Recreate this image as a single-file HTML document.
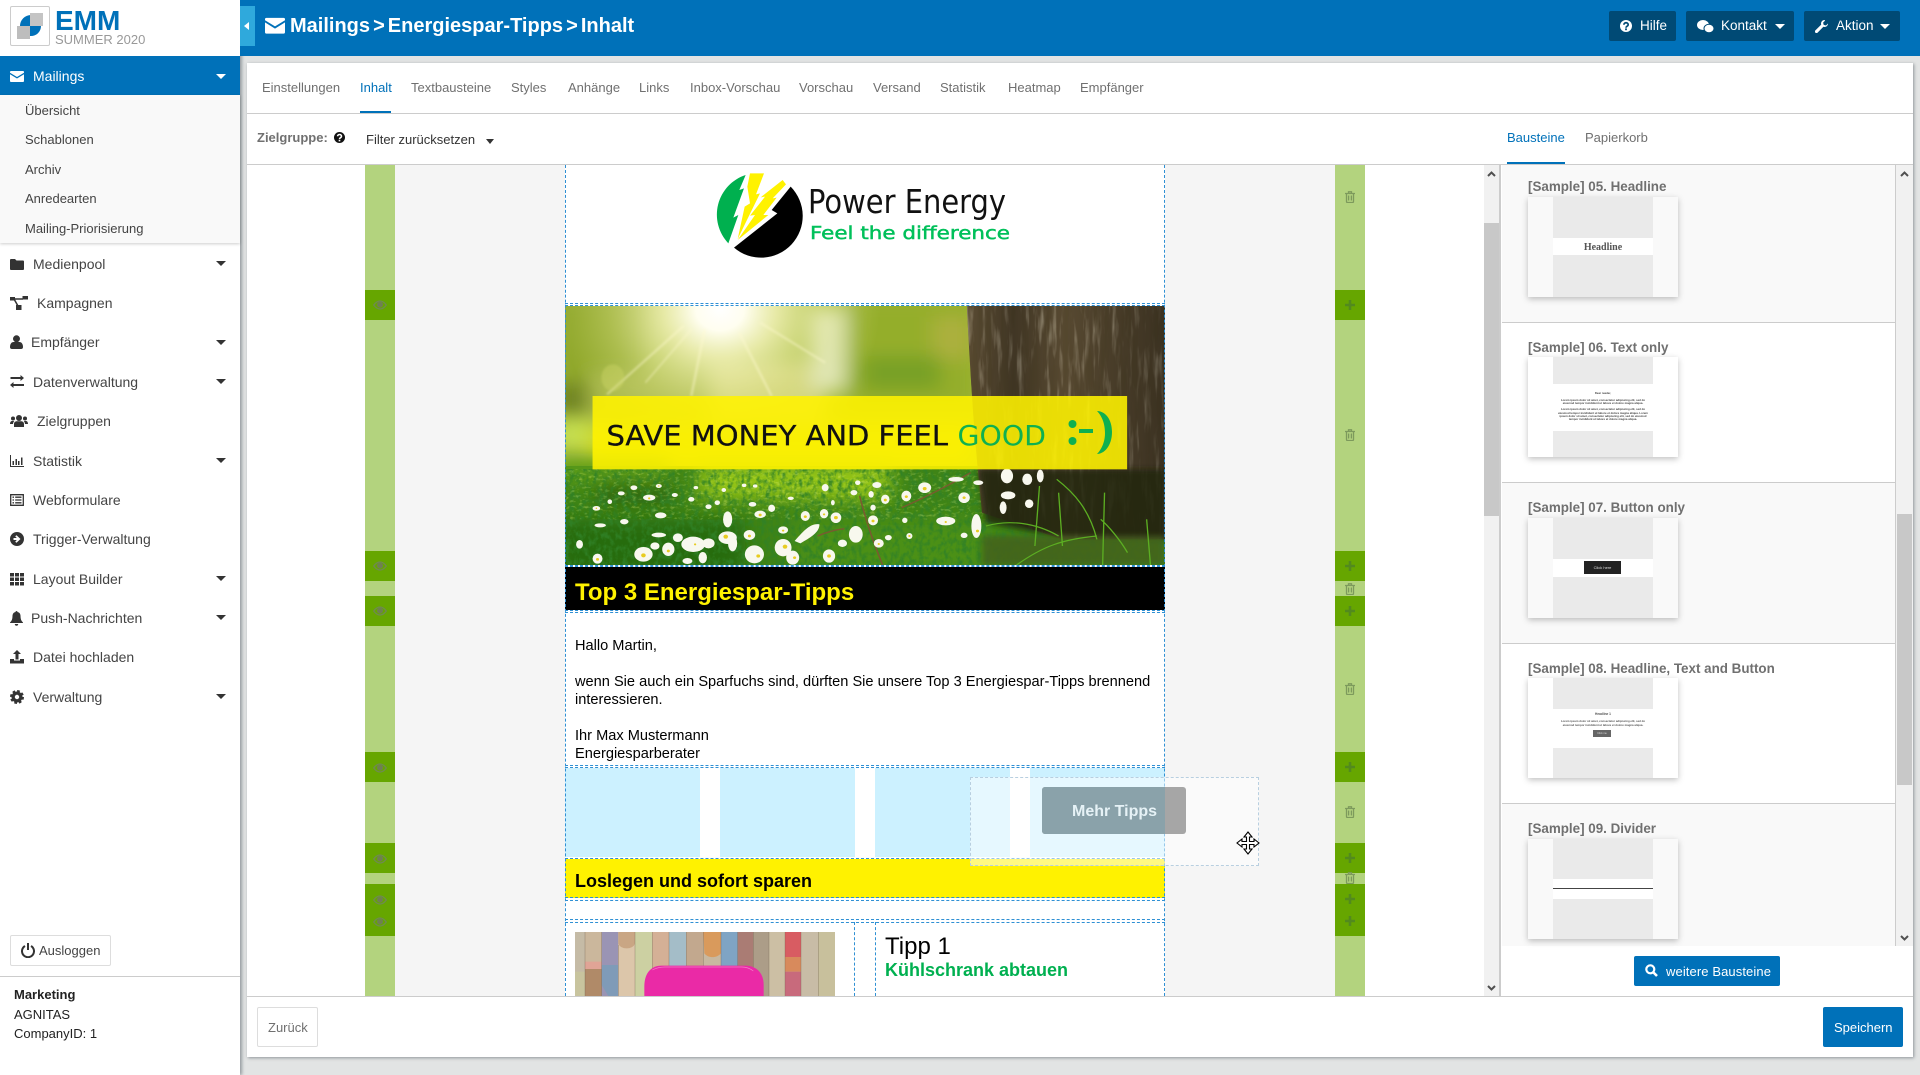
<!DOCTYPE html>
<html lang="de"><head><meta charset="utf-8"><title>EMM</title>
<style>
html,body{margin:0;padding:0;width:1920px;height:1075px;overflow:hidden;background:#e2e4e4;font-family:"Liberation Sans",sans-serif;color:#444}
div,span,svg{position:absolute;box-sizing:border-box}
.t{white-space:nowrap;line-height:20px;height:20px}
.m{font-size:14px;color:#444}
.s{font-size:13px;color:#444;left:25px}
.tab{font-size:13px;color:#707070;top:78px}
.ic{fill:currentColor}
.gl{left:365px;width:30px;background:#66a600}
.gr{left:1335px;width:30px;background:#66a600}
.bt{background:#004a75;border-radius:2px;top:11px;height:30px;color:#fff;font-size:13px}
.ti{left:1528px;font-size:13.400px;font-weight:bold;color:#707070}
.th{left:1528px;width:150px;height:100px;box-shadow:0 2px 6px rgba(0,0,0,.25)}
.gy{left:25px;width:100px;background:#eaeaea}
.dh{left:565px;width:600px;height:0;border-top:1px dashed #2f90d4}
.dv{width:0;border-left:1px dashed #2f90d4}
.cr{width:0;height:0;border-left:5px solid transparent;border-right:5px solid transparent;border-top:5px solid #333;left:216px}
.x{font-size:14.600px;color:#000;left:575px}
</style></head><body>
<svg width="0" height="0" style="left:0;top:0"><defs>
<symbol id="env" viewBox="0 0 14 14"><path class="ic" d="M0 3a1 1 0 0 1 1-1h12a1 1 0 0 1 1 1v.7L7 8 0 3.700zM0 5.200l7 4.300 7-4.300V12a1 1 0 0 1-1 1H1a1 1 0 0 1-1-1z"/></symbol>
<symbol id="eye" viewBox="0 0 14 10"><path fill="none" stroke="#6f8a52" stroke-width="1.200" d="M.7 5C3 1.800 5 1 7 1s4 .8 6.300 4C11 8.200 9 9 7 9S3 8.200.7 5z"/><circle cx="7" cy="4.600" r="3" fill="#6f8052"/></symbol>
<symbol id="plus" viewBox="0 0 10 10"><path d="M3.700 0h2.600v3.700H10v2.600H6.300V10H3.700V6.300H0V3.700h3.700z" fill="#528a1e"/></symbol>
<symbol id="tr" viewBox="0 0 10 12"><path fill="none" stroke="#7d9a5c" stroke-width="1.300" d="M1.500 3v7.500a1 1 0 0 0 1 1h5a1 1 0 0 0 1-1V3M0 2.500h10M3.500 2.500V.8h3v1.700M3.600 4.500v5M6.400 4.500v5"/></symbol>
</defs></svg>

<!-- SIDEBAR -->
<div style="left:0;top:0;width:240px;height:1075px;background:#fff;box-shadow:2px 0 3px rgba(60,70,80,.45)"></div>
<div style="left:10px;top:6px;width:40px;height:40px;border:1px solid #ccc;border-radius:2px;background:#fff"></div>
<svg style="left:10px;top:6px" width="40" height="40" viewBox="0 0 40 40"><path d="M10 30V20a11 11 0 0 1 11-11h10v11a10 10 0 0 1-10 10z" fill="#0071b9"/><rect x="7" y="20" width="13" height="13" fill="#bdbdbd"/><rect x="20" y="7" width="13" height="13" fill="#c4c4c4"/></svg>
<div class="t" style="left:55px;top:9px;font-size:28px;font-weight:bold;color:#0071b9;line-height:24px;height:24px">EMM</div>
<div class="t" style="left:55px;top:30px;font-size:13px;color:#999">SUMMER 2020</div>

<div style="left:0;top:56px;width:240px;height:39px;background:#0071b9"></div>
<svg style="left:10px;top:69px;color:#fff" width="14" height="14"><use href="#env"/></svg>
<div class="t m" style="left:33px;top:66px;color:#fff">Mailings</div>
<div class="cr" style="top:74px;border-top-color:#fff"></div>
<div style="left:0;top:95px;width:240px;height:148px;background:#f9f9f9;box-shadow:0 1px 3px rgba(0,0,0,.2)"></div>
<div class="t s" style="top:101px">Übersicht</div>
<div class="t s" style="top:130px">Schablonen</div>
<div class="t s" style="top:160px">Archiv</div>
<div class="t s" style="top:189px">Anredearten</div>
<div class="t s" style="top:219px">Mailing-Priorisierung</div>

<svg style="left:10px;top:257px;color:#333" width="14" height="14"><path class="ic" d="M0 3a1 1 0 0 1 1-1h4l1.500 1.500H13a1 1 0 0 1 1 1V12a1 1 0 0 1-1 1H1a1 1 0 0 1-1-1z"/></svg>
<div class="t m" style="left:33px;top:254px">Medienpool</div><div class="cr" style="top:261px"></div>
<svg style="left:10px;top:296px;color:#333" width="18" height="14" viewBox="0 0 18 14"><path class="ic" d="M0 1h5v3.500H0zM12.500 0H18v3.500h-5.500zM6 9h5.500v5H6z"/><path fill="none" stroke="#333" stroke-width="1.500" d="M4 3l4 7M4 3h9"/></svg>
<div class="t m" style="left:37px;top:293px">Kampagnen</div>
<svg style="left:10px;top:335px;color:#333" width="13" height="14" viewBox="0 0 13 14"><circle class="ic" cx="6.500" cy="3.800" r="3.500"/><path class="ic" d="M0 12c0-3 1.500-5 3.500-5h6c2 0 3.500 2 3.500 5a2 2 0 0 1-2 2H2a2 2 0 0 1-2-2z"/></svg>
<div class="t m" style="left:31px;top:332px">Empfänger</div><div class="cr" style="top:340px"></div>
<svg style="left:10px;top:375px;color:#333" width="14" height="14" viewBox="0 0 14 14"><path class="ic" d="M10.500 0L14 3l-3.500 3V4H.5V2h10zM3.500 7v2H14v2H3.500v2L0 10z"/></svg>
<div class="t m" style="left:33px;top:372px">Datenverwaltung</div><div class="cr" style="top:379px"></div>
<svg style="left:10px;top:414px;color:#333" width="18" height="14" viewBox="0 0 18 14"><circle class="ic" cx="9" cy="4" r="3"/><circle class="ic" cx="3" cy="4.500" r="2"/><circle class="ic" cx="15" cy="4.500" r="2"/><path class="ic" d="M4 13V10c0-2 1.500-2.800 3-2.800h4c1.500 0 3 .8 3 2.800v3zM0 10c0-2 1-3 2-3h2.200C3.500 8 3 9 3 10zM18 10c0-2-1-3-2-3h-2.200c.7 1 1.200 2 1.200 3z"/></svg>
<div class="t m" style="left:37px;top:411px">Zielgruppen</div>
<svg style="left:10px;top:454px;color:#333" width="14" height="14" viewBox="0 0 14 14"><path class="ic" d="M0 1h1v11h13v1H0zM2.500 7h1.500v4H2.500zM5.500 5h1.500v6H5.500zM8 7h1.500v4H8zM11 3.500h1.500V11H11z"/></svg>
<div class="t m" style="left:33px;top:451px">Statistik</div><div class="cr" style="top:458px"></div>
<svg style="left:10px;top:493px;color:#333" width="14" height="14" viewBox="0 0 14 14"><path fill="none" stroke="#333" stroke-width="1.300" d="M.7 1.700h12.600v10.600H.7zM2.500 4.200h1.500M2.500 7h1.500M2.500 9.800h1.500M5.200 4.200h6.300M5.200 7h6.300M5.200 9.800h6.300"/></svg>
<div class="t m" style="left:33px;top:490px">Webformulare</div>
<svg style="left:10px;top:532px" width="14" height="14" viewBox="0 0 14 14"><circle cx="7" cy="7" r="7" fill="#333"/><path d="M3.500 6h3.300L5.200 4.300 6.500 3.200 10.500 7l-4 3.800-1.300-1.100L6.800 8H3.500z" fill="#fff"/></svg>
<div class="t m" style="left:33px;top:529px">Trigger-Verwaltung</div>
<svg style="left:10px;top:572px;color:#333" width="14" height="14" viewBox="0 0 14 14"><path class="ic" d="M0 1h4v3.500H0zM5 1h4v3.500H5zM10 1h4v3.500h-4zM0 5.500h4V9H0zM5 5.500h4V9H5zM10 5.500h4V9h-4zM0 10h4v3.500H0zM5 10h4v3.500H5zM10 10h4v3.500h-4z"/></svg>
<div class="t m" style="left:33px;top:569px">Layout Builder</div><div class="cr" style="top:576px"></div>
<svg style="left:10px;top:611px;color:#333" width="13" height="15" viewBox="0 0 13 15"><path class="ic" d="M6.500 0c.6 0 1 .4 1 1 2 .4 3 2 3 4 0 3 .8 5 2.500 6.500V12H0v-.5C1.700 10 2.500 8 2.500 5c0-2 1-3.600 3-4 0-.6.4-1 1-1zM4.800 13h3.400a1.700 1.700 0 0 1-3.400 0z"/></svg>
<div class="t m" style="left:31px;top:608px">Push-Nachrichten</div><div class="cr" style="top:615px"></div>
<svg style="left:10px;top:650px;color:#333" width="14" height="14" viewBox="0 0 14 14"><path class="ic" d="M7 0l4 4H8.500v5.500h-3V4H3zM0 9h4v1.500h6V9h4v4.500H0z"/></svg>
<div class="t m" style="left:33px;top:647px">Datei hochladen</div>
<svg style="left:10px;top:690px" width="14" height="14" viewBox="0 0 14 14"><circle cx="7" cy="7" r="5.500" fill="#333"/><circle cx="7" cy="7" r="5.800" fill="none" stroke="#333" stroke-width="2.400" stroke-dasharray="2.600 1.950"/><circle cx="7" cy="7" r="2.200" fill="#fff"/></svg>
<div class="t m" style="left:33px;top:687px">Verwaltung</div><div class="cr" style="top:694px"></div>

<div style="left:10px;top:935px;width:101px;height:31px;border:1px solid #ddd;border-radius:2px"></div>
<svg style="left:21px;top:943px" width="14" height="15" viewBox="0 0 14 15"><path fill="none" stroke="#333" stroke-width="2" d="M4 3a6 6 0 1 0 6 0M7 0v7"/></svg>
<div class="t" style="left:39px;top:941px;font-size:13px;color:#444">Ausloggen</div>
<div style="left:0;top:976px;width:240px;height:1px;background:#ccc"></div>
<div class="t" style="left:14px;top:985px;font-size:13px;font-weight:bold;color:#222">Marketing</div>
<div class="t" style="left:14px;top:1005px;font-size:13px;color:#222">AGNITAS</div>
<div class="t" style="left:14px;top:1024px;font-size:13px;color:#222">CompanyID: 1</div>

<!-- HEADER -->
<div style="left:240px;top:0;width:1680px;height:56px;background:#0071b9"></div>
<div style="left:240px;top:6px;width:15px;height:40px;background:#2fa9dc"></div>
<div style="left:244px;top:22px;width:0;height:0;border-top:4px solid transparent;border-bottom:4px solid transparent;border-right:5px solid #fff"></div>
<svg style="left:265px;top:15px;color:#fff" width="20" height="20"><use href="#env"/></svg>
<div class="t" style="left:290px;top:16px;font-size:20px;font-weight:bold;color:#fff;word-spacing:-2.500px">Mailings &gt; Energiespar-Tipps &gt; Inhalt</div>
<div class="bt" style="left:1609px;width:67px"></div>
<svg style="left:1620px;top:20px" width="12" height="12" viewBox="0 0 12 12"><circle cx="6" cy="6" r="6" fill="#fff"/><path fill="none" stroke="#004a75" stroke-width="1.700" d="M3.900 4.700c0-2.600 4.300-2.600 4.300 0 0 1.500-2.200 1.500-2.200 3"/><rect x="5.100" y="8.400" width="1.800" height="1.800" fill="#004a75"/></svg>
<div class="t bt" style="left:1640px;background:none;top:16px;height:20px;font-size:13.500px">Hilfe</div>
<div class="bt" style="left:1686px;width:108px"></div>
<svg style="left:1697px;top:20px" width="17" height="13" viewBox="0 0 17 13"><ellipse cx="6" cy="5" rx="6" ry="5" fill="#fff"/><ellipse cx="12" cy="8.500" rx="5" ry="4.200" fill="#fff" stroke="#004a75"/></svg>
<div class="t bt" style="left:1721px;background:none;top:16px;height:20px;font-size:13.500px">Kontakt</div>
<div class="cr" style="left:1775px;top:24px;border-top-color:#fff"></div>
<div class="bt" style="left:1804px;width:96px"></div>
<svg style="left:1815px;top:20px" width="13" height="13" viewBox="0 0 13 13"><path fill="#fff" d="M9.500 0a3.500 3.500 0 0 0-3.300 4.600L.4 10.400a1.500 1.500 0 0 0 2.200 2.200l5.800-5.800A3.500 3.500 0 0 0 13 3.500l-2 2-2.300-.6-.6-2.300 2-2A3.500 3.500 0 0 0 9.500 0z"/></svg>
<div class="t bt" style="left:1836px;background:none;top:16px;height:20px;font-size:13.500px">Aktion</div>
<div class="cr" style="left:1880px;top:24px;border-top-color:#fff"></div>

<!-- MAIN PANEL -->
<div style="left:247px;top:63px;width:1666px;height:994px;background:#fff;box-shadow:1px 1px 3px rgba(60,70,80,.5)"></div>
<div class="t tab" style="left:262px">Einstellungen</div>
<div class="t tab" style="left:360px;color:#0071b9">Inhalt</div>
<div style="left:360px;top:111px;width:31px;height:2px;background:#0071b9"></div>
<div class="t tab" style="left:411px">Textbausteine</div>
<div class="t tab" style="left:511px">Styles</div>
<div class="t tab" style="left:568px">Anhänge</div>
<div class="t tab" style="left:639px">Links</div>
<div class="t tab" style="left:690px">Inbox-Vorschau</div>
<div class="t tab" style="left:799px">Vorschau</div>
<div class="t tab" style="left:873px">Versand</div>
<div class="t tab" style="left:940px">Statistik</div>
<div class="t tab" style="left:1008px">Heatmap</div>
<div class="t tab" style="left:1080px">Empfänger</div>
<div style="left:247px;top:113px;width:1666px;height:1px;background:#ccc"></div>
<div class="t" style="left:257px;top:128px;font-size:13px;font-weight:bold;color:#707070">Zielgruppe:</div>
<svg style="left:334px;top:132px" width="11" height="11" viewBox="0 0 12 12"><circle cx="6" cy="6" r="6" fill="#111"/><path fill="none" stroke="#fff" stroke-width="1.700" d="M3.900 4.700c0-2.600 4.300-2.600 4.300 0 0 1.500-2.200 1.500-2.200 3"/><rect x="5.100" y="8.400" width="1.800" height="1.800" fill="#fff"/></svg>
<div class="t" style="left:366px;top:130px;font-size:13px;color:#333">Filter zurücksetzen</div>
<div class="cr" style="left:486px;top:139px;border-left-width:4px;border-right-width:4px"></div>
<div class="t" style="left:1507px;top:128px;font-size:13px;color:#0071b9">Bausteine</div>
<div style="left:1507px;top:162px;width:58px;height:2px;background:#0071b9"></div>
<div class="t" style="left:1585px;top:128px;font-size:13px;color:#707070">Papierkorb</div>
<div style="left:247px;top:164px;width:1666px;height:1px;background:#ccc"></div>

<!-- EDITOR -->
<div style="left:395px;top:165px;width:940px;height:831px;background:#f5f5f5"></div>
<div style="left:365px;top:165px;width:30px;height:831px;background:#b3d37e"></div>
<div style="left:1335px;top:165px;width:30px;height:831px;background:#b3d37e"></div>
<div class="gl" style="top:290px;height:30px"></div>
<div class="gl" style="top:551px;height:30px"></div>
<div class="gl" style="top:596px;height:30px"></div>
<div class="gl" style="top:752px;height:30px"></div>
<div class="gl" style="top:843px;height:30px"></div>
<div class="gl" style="top:884px;height:52px"></div>
<div class="gr" style="top:290px;height:30px"></div>
<div class="gr" style="top:551px;height:30px"></div>
<div class="gr" style="top:596px;height:30px"></div>
<div class="gr" style="top:752px;height:30px"></div>
<div class="gr" style="top:843px;height:30px"></div>
<div class="gr" style="top:884px;height:52px"></div>
<svg style="left:373px;top:300px" width="14" height="10"><use href="#eye"/></svg>
<svg style="left:373px;top:561px" width="14" height="10"><use href="#eye"/></svg>
<svg style="left:373px;top:606px" width="14" height="10"><use href="#eye"/></svg>
<svg style="left:373px;top:763px" width="14" height="10"><use href="#eye"/></svg>
<svg style="left:373px;top:854px" width="14" height="10"><use href="#eye"/></svg>
<svg style="left:373px;top:895px" width="14" height="10"><use href="#eye"/></svg>
<svg style="left:373px;top:917px" width="14" height="10"><use href="#eye"/></svg>
<svg style="left:1345px;top:300px" width="10" height="10"><use href="#plus"/></svg>
<svg style="left:1345px;top:561px" width="10" height="10"><use href="#plus"/></svg>
<svg style="left:1345px;top:606px" width="10" height="10"><use href="#plus"/></svg>
<svg style="left:1345px;top:762px" width="10" height="10"><use href="#plus"/></svg>
<svg style="left:1345px;top:853px" width="10" height="10"><use href="#plus"/></svg>
<svg style="left:1345px;top:894px" width="10" height="10"><use href="#plus"/></svg>
<svg style="left:1345px;top:916px" width="10" height="10"><use href="#plus"/></svg>
<svg style="left:1345px;top:191px" width="10" height="12"><use href="#tr"/></svg>
<svg style="left:1345px;top:429px" width="10" height="12"><use href="#tr"/></svg>
<svg style="left:1345px;top:583px" width="10" height="12"><use href="#tr"/></svg>
<svg style="left:1345px;top:683px" width="10" height="12"><use href="#tr"/></svg>
<svg style="left:1345px;top:806px" width="10" height="12"><use href="#tr"/></svg>
<svg style="left:1345px;top:872px" width="10" height="12"><use href="#tr"/></svg>

<div style="left:565px;top:165px;width:600px;height:831px;background:#fff"></div>

<!-- Logo -->
<svg style="left:700px;top:165px" width="330" height="100" viewBox="0 0 990 300">
<path d="M137 30A125 125 0 0 0 85 235L115 150 100 158 132 70 118 75z" fill="#00b04f"/>
<path d="M272 65A125 125 0 0 1 102 248L232 145 215 135z" fill="#000"/>
<path d="M150 25H192L168 88 180 85 113 222 134 125 150 115 142 65z" fill="#fff200"/>
<path d="M248 45L258 58 218 100 230 98 190 150 205 150 113 225 165 150 150 152 195 95 182 97z" fill="#fff200"/>
</svg>
<svg style="left:700px;top:165px" width="330" height="100" viewBox="700 165 330 100">
<text x="808" y="213" font-family="'DejaVu Sans','Liberation Sans',sans-serif" font-size="33" fill="#111" textLength="198" lengthAdjust="spacingAndGlyphs">Power Energy</text>
<text x="810" y="239" font-family="'DejaVu Sans','Liberation Sans',sans-serif" font-size="17.500" fill="#00c05a" stroke="#00c05a" stroke-width=".45" textLength="200" lengthAdjust="spacingAndGlyphs">Feel the difference</text>
</svg>

<!-- Hero -->
<svg style="left:565px;top:306px" width="600" height="259" viewBox="0 0 1568 777" preserveAspectRatio="none">
<defs>
<filter id="b1" x="-40%" y="-40%" width="180%" height="180%"><feGaussianBlur stdDeviation="26"/></filter>
<filter id="b2" x="-40%" y="-40%" width="180%" height="180%"><feGaussianBlur stdDeviation="8"/></filter>
<filter id="b3" x="-40%" y="-40%" width="180%" height="180%"><feGaussianBlur stdDeviation="3"/></filter>
<filter id="bark" x="0" y="0" width="100%" height="100%"><feTurbulence type="fractalNoise" baseFrequency="0.05 0.006" numOctaves="3" seed="4"/><feColorMatrix values="0 0 0 0 .1  0 0 0 0 .07  0 0 0 0 .03  0 0 0 -4 2.300"/></filter>
<filter id="bark2" x="0" y="0" width="100%" height="100%"><feTurbulence type="fractalNoise" baseFrequency="0.07 0.008" numOctaves="3" seed="9"/><feColorMatrix values="0 0 0 0 .6  0 0 0 0 .53  0 0 0 0 .38  0 0 0 3 -1.500"/></filter>
<filter id="gr" x="0" y="0" width="100%" height="100%"><feTurbulence type="fractalNoise" baseFrequency="0.08 0.05" numOctaves="3" seed="2"/><feColorMatrix values="0 0 0 0 .03  0 0 0 0 .22  0 0 0 0 .02  0 0 0 -3 1.750"/></filter>
<filter id="gr2" x="0" y="0" width="100%" height="100%"><feTurbulence type="fractalNoise" baseFrequency="0.08 0.12" numOctaves="3" seed="6"/><feColorMatrix values="0 0 0 0 .78  0 0 0 0 .92  0 0 0 0 .2  0 0 0 3 -1.600"/></filter>
<radialGradient id="sun" gradientUnits="userSpaceOnUse" cx="405" cy="10" r="420"><stop offset="0" stop-color="#fff"/><stop offset=".15" stop-color="#fffef0"/><stop offset=".35" stop-color="#f7f5c0" stop-opacity=".8"/><stop offset=".7" stop-color="#e0e490" stop-opacity=".35"/><stop offset="1" stop-color="#cfd680" stop-opacity="0"/></radialGradient>
<linearGradient id="shade" x1="0" x2="1"><stop offset="0" stop-color="#000" stop-opacity="0"/><stop offset=".25" stop-color="#000" stop-opacity=".3"/><stop offset=".5" stop-color="#000" stop-opacity=".05"/><stop offset=".75" stop-color="#000" stop-opacity=".22"/><stop offset="1" stop-color="#000" stop-opacity=".35"/></linearGradient>
<clipPath id="tc"><path d="M1050 0H1568V700H1300L1090 620C1070 400 1062 260 1050 0z"/></clipPath>
</defs>
<rect width="1568" height="777" fill="#a4ba3e"/>
<g filter="url(#b1)">
<rect x="-30" y="-30" width="240" height="300" fill="#90a82a"/>
<rect x="-30" y="230" width="130" height="100" fill="#6f8420"/>
<rect x="60" y="200" width="300" height="140" fill="#a8b848"/>
<rect x="380" y="170" width="300" height="180" fill="#d2d47a"/>
<rect x="640" y="10" width="90" height="240" fill="#e2e8c0"/>
<rect x="740" y="-30" width="340" height="340" fill="#94ae2c"/>
<rect x="960" y="30" width="100" height="130" fill="#acb03c"/>
<rect x="780" y="150" width="200" height="100" fill="#78a028"/>
<rect x="-30" y="340" width="110" height="90" fill="#c6df50"/>
<rect x="60" y="360" width="1000" height="110" fill="#cfd818"/>
</g>
<rect width="900" height="500" fill="url(#sun)"/>
<g stroke="#fffbd0" stroke-opacity=".45" fill="none" filter="url(#b3)"><path stroke-width="6" d="M310 60L110 265M365 70L330 270M455 80L540 270M510 50L680 170"/><path stroke-width="4" d="M330 70L210 230"/></g>
<ellipse cx="125" cy="215" rx="30" ry="40" fill="#cfd868" opacity=".4" filter="url(#b3)"/>
<!-- grass -->
<rect y="480" width="1568" height="297" fill="#3f8416"/>
<g filter="url(#b1)">
<rect x="350" y="470" width="500" height="110" fill="#94c418"/>
<rect x="-30" y="460" width="300" height="70" fill="#5c9c18"/>
<rect x="80" y="530" width="200" height="60" fill="#2a6410"/>
<rect x="600" y="640" width="500" height="160" fill="#4c9018"/>
<rect x="-30" y="640" width="500" height="170" fill="#256c10"/>
</g>
<rect y="490" width="1568" height="287" filter="url(#gr)" opacity=".85"/>
<rect y="490" width="1100" height="150" filter="url(#gr2)" opacity=".35"/>
<!-- tree -->
<g clip-path="url(#tc)">
<rect x="1040" width="530" height="710" fill="#5c4d34"/>
<rect x="1040" width="530" height="710" filter="url(#bark2)" opacity=".55"/>
<rect x="1040" width="530" height="710" filter="url(#bark)"/>
<rect x="1040" width="530" height="710" fill="url(#shade)"/>
</g>
<path d="M1080 490H1568V700L1300 695 1100 650z" fill="#24260e" opacity=".85" filter="url(#b2)"/>
<rect x="1090" y="690" width="478" height="87" fill="#44601a" opacity=".8" filter="url(#b2)"/>
<g stroke="#5cae22" fill="none" stroke-width="3.500"><path d="M1228 720L1240 540M1405 777L1410 560M1300 720L1290 560M1530 777L1520 640M1390 700C1370 610 1330 560 1285 520M1470 740C1450 700 1420 660 1400 640M1100 660C1160 640 1230 650 1290 690M1180 777C1250 720 1300 700 1390 690"/></g>
<path d="M880 605C950 570 1000 540 1060 500M770 570C790 660 810 720 830 777M660 690C680 680 700 672 730 668" stroke="#7a5a30" stroke-width="4" fill="none"/>
<g fill="#f8f8ee">
<ellipse cx="205" cy="745" rx="24" ry="22"/><ellipse cx="270" cy="730" rx="16" ry="20"/><ellipse cx="335" cy="715" rx="31" ry="23"/><ellipse cx="375" cy="712" rx="16" ry="15"/><ellipse cx="425" cy="695" rx="24" ry="19"/><ellipse cx="438" cy="712" rx="12" ry="24"/><ellipse cx="425" cy="640" rx="12" ry="24"/><ellipse cx="295" cy="695" rx="13" ry="13"/><ellipse cx="482" cy="687" rx="15" ry="15"/><ellipse cx="495" cy="745" rx="25" ry="27"/><ellipse cx="570" cy="725" rx="22" ry="26"/><ellipse cx="595" cy="755" rx="17" ry="21"/><ellipse cx="690" cy="750" rx="16" ry="20"/><path d="M600 705C620 680 640 650 665 655 665 680 640 695 615 712z"/><ellipse cx="760" cy="685" rx="18" ry="25"/><ellipse cx="725" cy="712" rx="12" ry="11"/><ellipse cx="708" cy="635" rx="14" ry="16"/><ellipse cx="677" cy="623" rx="11" ry="14"/><ellipse cx="628" cy="630" rx="12" ry="15"/><ellipse cx="805" cy="643" rx="13" ry="15"/><ellipse cx="820" cy="712" rx="13" ry="13"/><ellipse cx="845" cy="695" rx="9" ry="8"/><ellipse cx="900" cy="690" rx="8" ry="9"/><ellipse cx="888" cy="643" rx="7" ry="8"/><ellipse cx="995" cy="645" rx="25" ry="13"/><ellipse cx="1075" cy="660" rx="13" ry="36"/><ellipse cx="1043" cy="688" rx="9" ry="8"/><ellipse cx="1043" cy="575" rx="15" ry="16"/><ellipse cx="940" cy="545" rx="17" ry="16"/><ellipse cx="892" cy="570" rx="13" ry="16"/><ellipse cx="837" cy="580" rx="11" ry="14"/><ellipse cx="800" cy="565" rx="7" ry="10"/><ellipse cx="755" cy="560" rx="9" ry="8"/><ellipse cx="815" cy="537" rx="12" ry="9"/><ellipse cx="765" cy="530" rx="7" ry="7"/><ellipse cx="680" cy="545" rx="9" ry="11"/><ellipse cx="1022" cy="520" rx="20" ry="7"/><ellipse cx="1155" cy="510" rx="16" ry="22"/><ellipse cx="1208" cy="520" rx="13" ry="17"/><ellipse cx="1242" cy="510" rx="9" ry="19"/><ellipse cx="1158" cy="568" rx="19" ry="12"/><ellipse cx="1145" cy="605" rx="9" ry="19"/><ellipse cx="1213" cy="593" rx="11" ry="13"/><ellipse cx="1080" cy="530" rx="13" ry="7"/><ellipse cx="510" cy="625" rx="15" ry="11"/><ellipse cx="540" cy="607" rx="9" ry="11"/><ellipse cx="490" cy="595" rx="10" ry="7"/><ellipse cx="375" cy="602" rx="8" ry="7"/><ellipse cx="398" cy="590" rx="7" ry="7"/><ellipse cx="330" cy="580" rx="8" ry="7"/><ellipse cx="287" cy="567" rx="8" ry="6"/><ellipse cx="220" cy="575" rx="16" ry="9"/><ellipse cx="155" cy="647" rx="11" ry="8"/><ellipse cx="250" cy="628" rx="15" ry="9"/><ellipse cx="92" cy="658" rx="15" ry="6"/><ellipse cx="82" cy="607" rx="10" ry="7"/><ellipse cx="117" cy="587" rx="6" ry="7"/><ellipse cx="147" cy="562" rx="9" ry="6"/><ellipse cx="180" cy="545" rx="9" ry="7"/><ellipse cx="245" cy="540" rx="8" ry="6"/><ellipse cx="342" cy="545" rx="6" ry="5"/><ellipse cx="415" cy="552" rx="6" ry="6"/><ellipse cx="468" cy="538" rx="6" ry="5"/><ellipse cx="497" cy="540" rx="6" ry="5"/><ellipse cx="38" cy="715" rx="9" ry="13"/><ellipse cx="85" cy="758" rx="13" ry="15"/><ellipse cx="245" cy="687" rx="19" ry="7"/><ellipse cx="235" cy="720" rx="12" ry="11"/><ellipse cx="805" cy="605" rx="7" ry="9"/><ellipse cx="700" cy="590" rx="5" ry="8"/><ellipse cx="590" cy="577" rx="8" ry="5"/><ellipse cx="570" cy="672" rx="13" ry="11"/><ellipse cx="320" cy="765" rx="13" ry="9"/><ellipse cx="360" cy="755" rx="11" ry="17"/>
</g>
<g fill="#e8cc20"><circle cx="205" cy="748" r="6"/><circle cx="270" cy="735" r="4"/><circle cx="340" cy="715" r="3"/><circle cx="420" cy="692" r="6"/><circle cx="482" cy="690" r="4"/><circle cx="505" cy="750" r="5"/><circle cx="575" cy="722" r="6"/><circle cx="600" cy="755" r="4"/><circle cx="690" cy="750" r="5"/><circle cx="708" cy="635" r="5"/><circle cx="677" cy="625" r="3"/><circle cx="628" cy="632" r="4"/><circle cx="805" cy="645" r="4"/><circle cx="820" cy="714" r="3"/><circle cx="900" cy="690" r="3"/><circle cx="995" cy="648" r="3"/><circle cx="1078" cy="675" r="4"/><circle cx="1043" cy="575" r="4"/><circle cx="940" cy="548" r="5"/><circle cx="892" cy="572" r="4"/><circle cx="837" cy="582" r="4"/><circle cx="510" cy="627" r="4"/><circle cx="245" cy="540" r="2"/><circle cx="220" cy="577" r="3"/><circle cx="82" cy="607" r="2"/><circle cx="85" cy="760" r="4"/><circle cx="570" cy="674" r="3"/></g>
<rect x="72" y="270" width="1397" height="220" fill="#fff200" opacity=".88"/>
</svg>
<svg style="left:565px;top:306px" width="600" height="259" viewBox="565 306 600 259">
<text x="606.500" y="445" font-family="'DejaVu Sans','Liberation Sans',sans-serif" font-size="28" fill="#111" stroke="#111" stroke-width=".3" textLength="341.500" lengthAdjust="spacingAndGlyphs">SAVE MONEY AND FEEL</text>
<text x="957.500" y="445" font-family="'DejaVu Sans','Liberation Sans',sans-serif" font-size="28" fill="#0fb050" textLength="88.500" lengthAdjust="spacingAndGlyphs">GOOD</text>
<circle cx="1072.500" cy="424" r="4" fill="#0fb050"/><circle cx="1072.500" cy="441" r="4" fill="#0fb050"/><rect x="1079" y="429" width="14" height="4" fill="#0fb050"/>
<path d="M1097 411c8 0 15 8 15 21 0 14-8 22-15 22 2-2 8-9 8-21s-5-19-8-22z" fill="#0fb050"/>
</svg>

<div style="left:565px;top:567px;width:600px;height:43px;background:#000"></div>
<div class="t" style="left:575px;top:579px;height:28px;line-height:28px;font-size:24px;font-weight:bold;color:#fff200">Top 3 Energiespar-Tipps</div>

<div class="t x" style="top:636px">Hallo Martin,</div>
<div class="t x" style="top:672px">wenn Sie auch ein Sparfuchs sind, dürften Sie unsere Top 3 Energiespar-Tipps brennend</div>
<div class="t x" style="top:690px">interessieren.</div>
<div class="t x" style="top:726px">Ihr Max Mustermann</div>
<div class="t x" style="top:744px">Energiesparberater</div>

<div style="left:565px;top:768px;width:135px;height:89px;background:#ccf1ff"></div>
<div style="left:720px;top:768px;width:135px;height:89px;background:#ccf1ff"></div>
<div style="left:875px;top:768px;width:135px;height:89px;background:#ccf1ff"></div>
<div style="left:1030px;top:768px;width:135px;height:89px;background:#ccf1ff"></div>
<div style="left:565px;top:859px;width:600px;height:39px;background:#fff200"></div>
<div class="t" style="left:575px;top:871px;font-size:18px;font-weight:bold;color:#000">Loslegen und sofort sparen</div>

<svg style="left:575px;top:932px" width="260" height="64" viewBox="30 21 780 192">
<rect x="30" y="21" width="780" height="192" fill="#c9b9a2"/>
<rect x="30" y="21" width="30" height="192" fill="#c5bba6"/><rect x="30" y="140" width="30" height="73" fill="#c8c49e"/>
<rect x="60" y="21" width="50" height="110" fill="#cbb79c"/><rect x="60" y="110" width="50" height="22" fill="#e0a496"/><rect x="60" y="132" width="50" height="81" fill="#b08a68"/>
<rect x="110" y="21" width="50" height="192" fill="#9a94b4"/><path d="M110 120H160V213H130L110 180z" fill="#7f9bb8"/>
<rect x="160" y="21" width="50" height="192" fill="#dcc6aa"/><path d="M160 21H210V55C205 75 165 75 160 55z" fill="#c9a684"/>
<rect x="210" y="21" width="52" height="192" fill="#ccd0a2"/>
<rect x="262" y="21" width="50" height="192" fill="#d4b096"/>
<rect x="312" y="21" width="52" height="192" fill="#a4bdc8"/>
<rect x="364" y="21" width="51" height="192" fill="#c2a88e"/>
<rect x="415" y="21" width="53" height="192" fill="#c8b8a0"/><path d="M415 21H468V85C455 100 430 100 418 85z" fill="#d99a5c"/>
<rect x="468" y="21" width="50" height="192" fill="#7fa4c4"/>
<rect x="518" y="21" width="47" height="192" fill="#aa7c74"/>
<rect x="565" y="21" width="47" height="192" fill="#ac9d88"/>
<rect x="612" y="21" width="48" height="192" fill="#ccbfa4"/>
<rect x="660" y="21" width="48" height="75" fill="#d85c62"/><rect x="660" y="96" width="48" height="44" fill="#d88a5c"/><rect x="660" y="140" width="48" height="73" fill="#c86a7c"/>
<rect x="708" y="21" width="52" height="192" fill="#c8bca6"/>
<rect x="760" y="21" width="50" height="192" fill="#c8c09c"/>
<path d="M60 21V213M110 21V213M160 60V213M210 21V213M262 21V213M312 21V213M364 21V213M415 21V213M468 21V213M518 21V213M565 21V213M612 21V213M660 21V213M708 21V213M760 21V213" stroke="#6a5a48" stroke-width="1.500" opacity=".6"/>
<path d="M238 213V185C238 140 262 122 290 122H540C575 122 596 145 596 180V213z" fill="#ea2aa6"/>
<path d="M262 135C275 128 290 126 300 126H530C545 126 555 130 565 138" stroke="#f47cc8" stroke-width="2" fill="none"/>
</svg>
<div class="t" style="left:885px;top:934px;height:26px;line-height:26px;font-size:24px;color:#000">Tipp 1</div>
<div class="t" style="left:885px;top:960px;font-size:18px;font-weight:bold;color:#00b050">Kühlschrank abtauen</div>

<!-- dashed guides -->
<div class="dh" style="top:303px"></div><div class="dh" style="top:305px"></div>
<div class="dh" style="top:565px"></div><div class="dh" style="top:566px"></div>
<div class="dh" style="top:610px"></div><div class="dh" style="top:612px"></div>
<div class="dh" style="top:765px"></div><div class="dh" style="top:767px"></div>
<div class="dh" style="top:858px"></div><div class="dh" style="top:897px"></div>
<div class="dh" style="top:900px"></div><div class="dh" style="top:919px"></div><div class="dh" style="top:922px"></div>
<div class="dv" style="left:565px;top:165px;height:831px"></div>
<div class="dv" style="left:1164px;top:165px;height:831px"></div>
<div class="dv" style="left:854px;top:922px;height:74px"></div>
<div class="dv" style="left:875px;top:922px;height:74px"></div>

<!-- drag ghost -->
<div style="left:970px;top:777px;width:289px;height:89px;background:rgba(255,255,255,.5);border:1px dashed #b8cfe0"></div>
<div style="left:1042px;top:787px;width:144px;height:47px;background:#a6a6a6;border-radius:3px"></div>
<div style="left:1042px;top:787px;width:123px;height:47px;background:#8aa2aa;border-radius:3px 0 0 3px"></div>
<div class="t" style="left:1072px;top:802px;font-size:16px;font-weight:bold;color:#e6f2f6">Mehr Tipps</div>
<svg style="left:1236px;top:831px" width="24" height="24" viewBox="0 0 24 24"><path d="M12 1l4 5h-2.500v4.500H18V8l5 4-5 4v-2.500h-4.500V18H16l-4 5-4-5h2.500v-4.500H6V16l-5-4 5-4v2.500h4.500V6H8z" fill="#fff" stroke="#000" stroke-width="1.100"/></svg>

<!-- left scrollbar -->
<div style="left:1484px;top:165px;width:15px;height:831px;background:#f1f1f1"></div>
<div style="left:1484px;top:223px;width:15px;height:293px;background:#c8c8c8"></div>
<svg style="left:1487px;top:171px" width="9" height="6"><path d="M1 5l3.500-3.500L8 5" fill="none" stroke="#505050" stroke-width="2"/></svg>
<svg style="left:1487px;top:985px" width="9" height="6"><path d="M1 1l3.500 3.500L8 1" fill="none" stroke="#505050" stroke-width="2"/></svg>
<div style="left:1499px;top:165px;width:2px;height:831px;background:#ccc"></div>

<!-- RIGHT LIST -->
<div style="left:1502px;top:165px;width:393px;height:157px;background:#f9f9f9"></div>
<div style="left:1502px;top:322px;width:393px;height:1px;background:#ccc"></div>
<div style="left:1502px;top:482px;width:393px;height:1px;background:#ccc"></div>
<div style="left:1502px;top:483px;width:393px;height:160px;background:#f9f9f9"></div>
<div style="left:1502px;top:643px;width:393px;height:1px;background:#ccc"></div>
<div style="left:1502px;top:803px;width:393px;height:1px;background:#ccc"></div>
<div style="left:1502px;top:804px;width:393px;height:142px;background:#f9f9f9"></div>

<div class="t ti" style="top:177px">[Sample] 05. Headline</div>
<div class="th" style="top:197px;background:#f9f9f9"><div class="gy" style="top:0;height:100px"></div><div class="gy" style="top:41px;height:17px;background:#fff"></div><div class="t" style="left:25px;width:100px;text-align:center;top:41px;font:bold 10px/20px 'Liberation Serif',serif;color:#555">Headline</div></div>
<div class="t ti" style="top:338px">[Sample] 06. Text only</div>
<div class="th" style="top:357px;background:#fff"><div class="gy" style="top:0;height:27px"></div><div class="gy" style="top:74px;height:26px"></div>
<div style="left:25px;width:100px;top:35px;font-size:2.800px;line-height:3.300px;text-align:center;color:#444;font-weight:bold">Dear reader,<br><br>Lorem ipsum dolor sit amet, consectetur adipiscing elit, sed do<br>eiusmod tempor incididunt ut labore et dolore magna aliqua.<br><br>Lorem ipsum dolor sit amet, consectetur adipiscing elit, sed do<br>eiusmod tempor incididunt ut labore et dolore magna aliqua. Lorem<br>ipsum dolor sit amet, consectetur adipiscing elit, sed do eiusmod<br>tempor incididunt ut labore et dolore magna aliqua.</div></div>
<div class="t ti" style="top:498px">[Sample] 07. Button only</div>
<div class="th" style="top:518px;background:#f9f9f9"><div class="gy" style="top:0;height:100px"></div><div class="gy" style="top:41px;height:18px;background:#fff"></div><div style="left:56px;top:43px;width:37px;height:13px;background:#222;color:#ddd;font-size:4px;line-height:13px;text-align:center">Click here</div></div>
<div class="t ti" style="top:659px">[Sample] 08. Headline, Text and Button</div>
<div class="th" style="top:678px;background:#fff"><div class="gy" style="top:0;height:31px"></div><div class="gy" style="top:70px;height:30px"></div>
<div style="left:25px;width:100px;top:35px;font-size:2.800px;line-height:3.500px;text-align:center;color:#555;font-weight:bold"><span style="position:static;font-size:3.200px">Headline 1</span><br><br>Lorem ipsum dolor sit amet, consectetur adipiscing elit, sed do<br>eiusmod tempor incididunt ut labore et dolore magna aliqua.</div>
<div style="left:65px;top:52px;width:18px;height:7px;background:#666;color:#ddd;font-size:2.500px;line-height:7px;text-align:center">Click me</div></div>
<div class="t ti" style="top:819px">[Sample] 09. Divider</div>
<div class="th" style="top:839px;background:#f9f9f9"><div class="gy" style="top:0;height:100px"></div><div class="gy" style="top:40px;height:20px;background:#fff"></div><div class="gy" style="top:49px;height:1px;background:#444"></div></div>

<!-- right scrollbar -->
<div style="left:1895px;top:165px;width:1px;height:781px;background:#ccc"></div>
<div style="left:1896px;top:165px;width:17px;height:781px;background:#f1f1f1"></div>
<div style="left:1897px;top:514px;width:15px;height:271px;background:#c8c8c8"></div>
<svg style="left:1900px;top:171px" width="9" height="6"><path d="M1 5l3.500-3.500L8 5" fill="none" stroke="#505050" stroke-width="2"/></svg>
<svg style="left:1900px;top:935px" width="9" height="6"><path d="M1 1l3.500 3.500L8 1" fill="none" stroke="#505050" stroke-width="2"/></svg>

<div style="left:1634px;top:956px;width:146px;height:30px;background:#0071b9;border-radius:2px"></div>
<svg style="left:1645px;top:964px" width="13" height="13" viewBox="0 0 13 13"><circle cx="5.300" cy="5.300" r="4" fill="none" stroke="#fff" stroke-width="2.200"/><path d="M8.500 8.500l3.500 3.500" stroke="#fff" stroke-width="2.600"/></svg>
<div class="t" style="left:1666px;top:962px;font-size:13px;color:#fff;letter-spacing:.1px">weitere Bausteine</div>

<!-- bottom bar -->
<div style="left:247px;top:996px;width:1666px;height:1px;background:#ccc"></div>
<div style="left:257px;top:1007px;width:61px;height:40px;border:1px solid #ddd;border-radius:2px;background:#fff"></div>
<div class="t" style="left:268px;top:1018px;font-size:13px;color:#707070">Zurück</div>
<div style="left:1823px;top:1007px;width:80px;height:40px;background:#0071b9;border-radius:2px"></div>
<div class="t" style="left:1834px;top:1018px;font-size:13px;color:#fff">Speichern</div>
</body></html>
